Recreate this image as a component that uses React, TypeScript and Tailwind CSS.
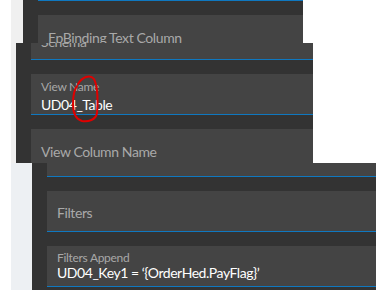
import React from "react";

const FONT = { fontFamily: "Lato, 'Open Sans', sans-serif" };

function Line() {
  return <div className="h-px w-full bg-[#0f78c0]" />;
}

function PlaceholderField({ text, pt }: { text: string; pt: string }) {
  return (
    <div className="w-full">
      <div className={`h-[40px] w-full bg-[#444444] pl-[10px] ${pt}`}>
        <div className="text-[14px] leading-[20px] tracking-[-0.4px] text-[#a9a9a9] whitespace-nowrap">{text}</div>
      </div>
      <Line />
    </div>
  );
}

function ValueField({ label, value, labelPt, gap }: { label: string; value: string; labelPt: string; gap: string }) {
  return (
    <div className="w-full">
      <div className={`h-[40px] w-full bg-[#444444] pl-[10px] ${labelPt}`}>
        <div className="text-[12px] leading-[14px] tracking-[-0.3px] text-[#a8a8a8] whitespace-nowrap">{label}</div>
        <div className={`text-[14px] leading-[20px] tracking-[-0.45px] text-white whitespace-nowrap ${gap}`}>{value}</div>
      </div>
      <Line />
    </div>
  );
}

export default function App() {
  return (
    <div className="relative w-[390px] h-[290px] overflow-hidden bg-white" style={FONT}>
      {/* light gray backgrounds */}
      <div className="absolute left-[11px] top-0 w-[30px] h-[163px] bg-[#f0f0f0]" />
      <div className="absolute left-[11px] top-[163px] w-[30px] h-[127px] bg-[#edf0f3]" />

      {/* Layer A */}
      <div className="absolute left-[23px] top-0 w-[280px] h-[43px] bg-[#333333] overflow-hidden">
        <div className="flex flex-col pl-[15px] gap-[14px]">
          <Line />
          <PlaceholderField text="EpBinding Text Column" pt="pt-[13px]" />
        </div>
      </div>

      {/* Layer B */}
      <div className="absolute left-[16px] top-[43px] w-[297px] h-[120px] bg-[#333333] overflow-hidden">
        <div className="flex flex-col pl-[15px] gap-[14px] mt-[-24px]">
          <PlaceholderField text="Schema" pt="pt-[13px]" />
          <ValueField label="View Name" value="UD04_Table" labelPt="pt-[6px]" gap="mt-[1px]" />
          <PlaceholderField text="View Column Name" pt="pt-[13px]" />
        </div>
      </div>

      {/* Layer C */}
      <div className="absolute left-[32px] top-[163px] w-[344px] h-[127px] bg-[#333333] overflow-hidden">
        <div className="flex flex-col pl-[15px] gap-[14px] mt-[-27px]">
          <PlaceholderField text="" pt="pt-[13px]" />
          <PlaceholderField text="Filters" pt="pt-[12px]" />
          <ValueField label="Filters Append" value="UD04_Key1 = ‘{OrderHed.PayFlag}’" labelPt="pt-[5px]" gap="mt-[-2px]" />
        </div>
      </div>

      {/* red annotation */}
      <svg className="absolute left-0 top-0" width="390" height="290" viewBox="0 0 390 290" fill="none">
        <path
          d="M78 84 C 82 77, 90 74, 94 79 C 98 86, 98 104, 97 113 C 96 120, 88 122, 82 121 C 75 119, 73 112, 73 104 C 73 96, 74 90, 77 86"
          stroke="#e00000"
          strokeWidth="2"
          strokeLinecap="round"
        />
      </svg>
    </div>
  );
}
